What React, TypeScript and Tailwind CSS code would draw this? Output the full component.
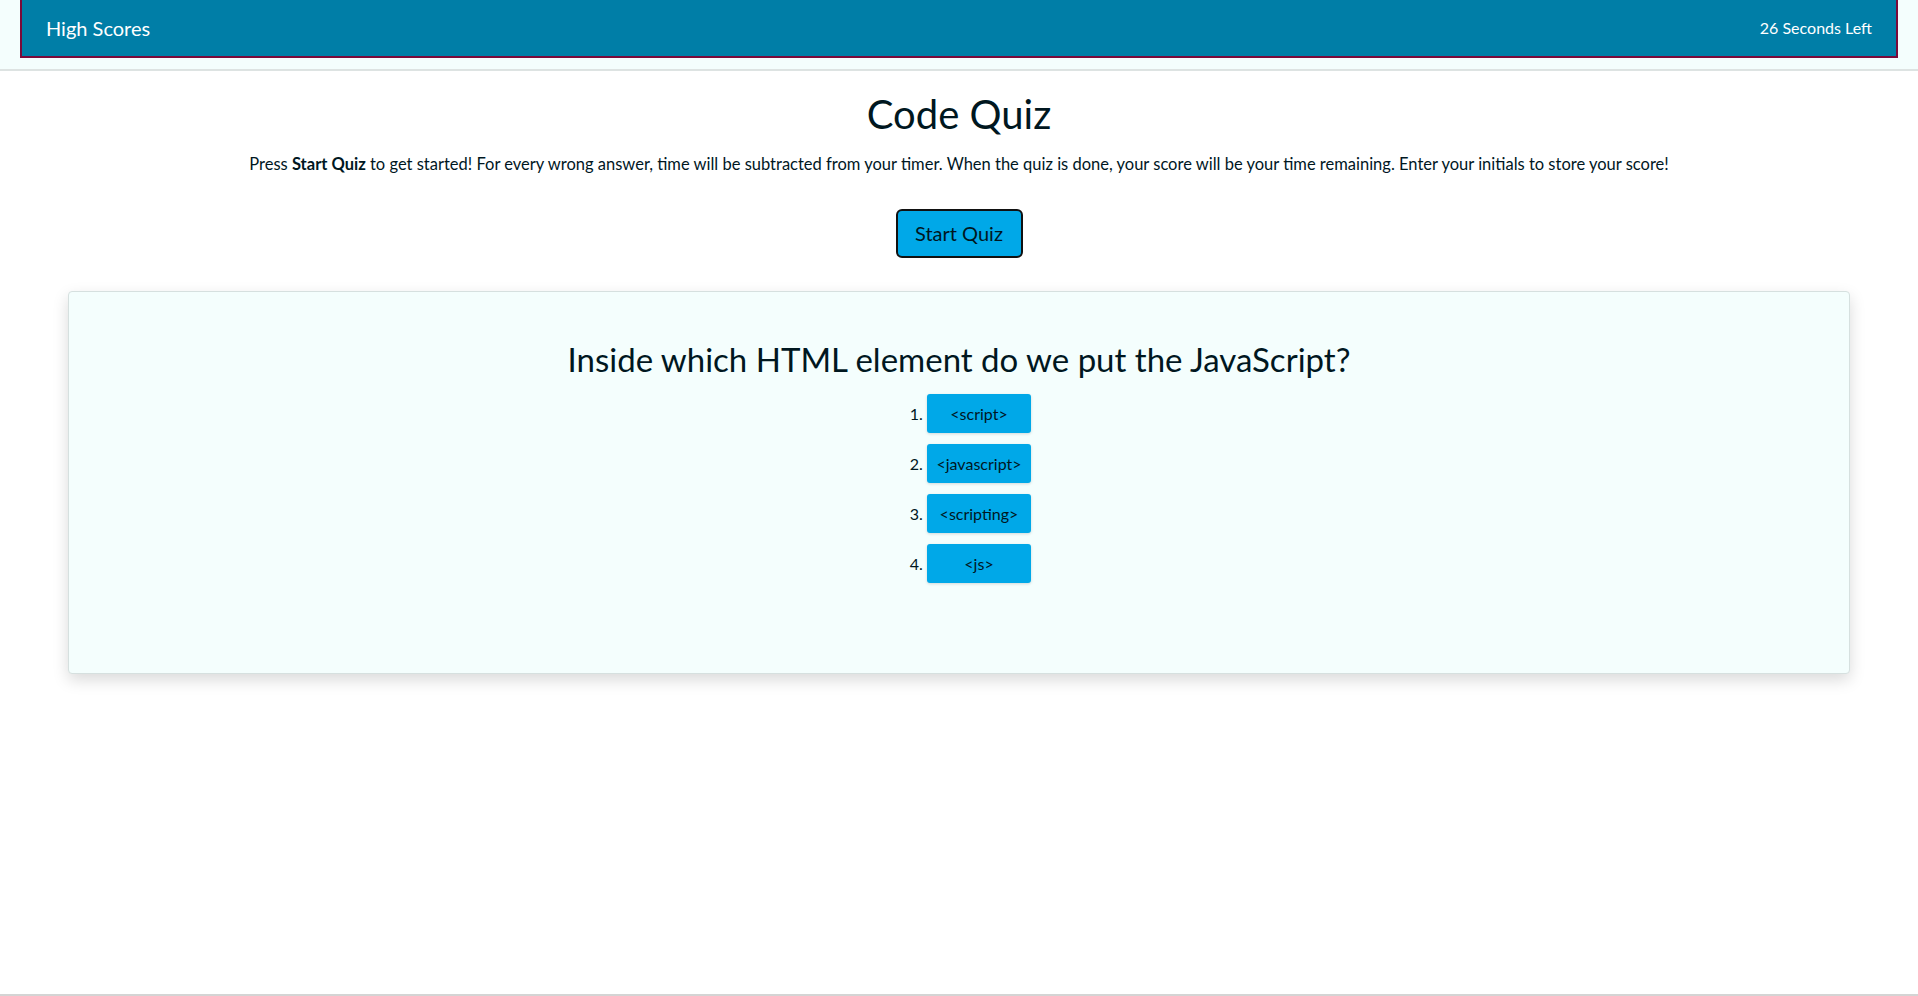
const ANSWERS = ["<script>", "<javascript>", "<scripting>", "<js>"];

export default function App() {
  return (
    <div className="min-h-[996px] bg-white text-[#00171f] border-b-2 border-[#d4d4d4]" style={{ fontFamily: "Lato, 'Open Sans', sans-serif" }}>
      <header className="bg-[#f4fefd] border-b-2 border-[#dde3e2] px-5 pb-[11px]">
        <nav className="h-[58px] bg-[#007ea7] border-2 border-t-0 border-[#7a0a3a] flex items-center justify-between pl-[24px] pr-[24px]">
          <a className="text-white text-[20px]">High Scores</a>
          <span className="text-white text-[16px]">26 Seconds Left</span>
        </nav>
      </header>

      <main className="flex flex-col items-center">
        <h1 className="text-[40px] leading-none mt-[23px]">Code Quiz</h1>
        <p className="text-[16.5px] mt-[18px]">
          Press <strong className="font-bold">Start Quiz</strong> to get started! For every wrong answer, time will be subtracted from your timer. When the quiz is done, your score will be your time remaining. Enter your initials to store your score!
        </p>
        <button className="mt-[32px] w-[127px] h-[49px] bg-[#00a8e8] border-2 border-[#111] rounded-md text-[20px] text-[#00171f]">
          Start Quiz
        </button>

        <section className="self-stretch mx-[68px] mt-[33px] h-[383px] bg-[#f4fefd] border border-[#d6e0df] rounded shadow-[0_6px_16px_rgba(0,0,0,0.15)] flex flex-col items-center">
          <h2 className="text-[33px] mt-[47px] leading-tight">Inside which HTML element do we put the JavaScript?</h2>
          <ol className="list-decimal mt-[14px] pl-10 flex flex-col gap-[11px]">
            {ANSWERS.map((a) => (
              <li key={a} className="text-[16px] marker:text-[#00171f]">
                <button className="w-[104px] h-[39px] bg-[#00a8e8] rounded-[3px] shadow-[0_1px_3px_rgba(0,0,0,0.15)] text-[16px] text-[#00171f]">
                  {a}
                </button>
              </li>
            ))}
          </ol>
        </section>
      </main>
    </div>
  );
}
